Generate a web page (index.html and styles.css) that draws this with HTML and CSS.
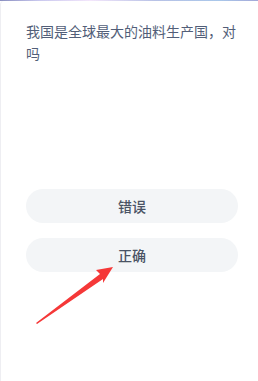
FILE: index.html
```html
<!DOCTYPE html>
<html lang="zh">
<head>
<meta charset="utf-8">
<link rel="stylesheet" href="styles.css">
</head>
<body>
<div class="topbar"></div>
<div class="card">
  <p class="question">我国是全球最大的油料生产国，对吗</p>
  <div class="options">
    <div class="option">错误</div>
    <div class="option">正确</div>
  </div>
  <svg class="arrow" width="120" height="70" viewBox="0 0 120 70">
    <polygon fill="#f53838" points="113,7 96,10 100,14 36,63 37,64 103,19 103,23"/>
  </svg>
</div>
</body>
</html>
```
FILE: styles.css
```css
html, body {
  margin: 0;
  padding: 0;
  background: #ffffff;
}
body {
  width: 258px;
  height: 381px;
  overflow: hidden;
  position: relative;
  font-family: "Noto Sans CJK SC", "Noto Sans", sans-serif;
}
.topbar {
  height: 1px;
  background: linear-gradient(90deg, #8a8fc0 0%, #c9c8ee 15%, #f3e6fb 35%, #b8c2e6 60%, #a9c7ea 85%, #a4a8d8 100%);
}
.card {
  height: 380px;
  border-left: 1px solid #eeeef2;
  border-top-left-radius: 4px;
  box-sizing: border-box;
  padding: 19px 20px 0 25px;
}
.question {
  margin: 0;
  font-size: 14px;
  line-height: 22px;
  color: #525e78;
}
.options {
  margin-top: 125px;
  display: flex;
  flex-direction: column;
  gap: 15px;
}
.option {
  height: 34px;
  border-radius: 17px;
  background: #f3f5f7;
  color: #4a5364;
  font-size: 14px;
  font-weight: 500;
  display: flex;
  align-items: center;
  justify-content: center;
}
.arrow {
  position: absolute;
  left: 0;
  top: 260px;
}
```
